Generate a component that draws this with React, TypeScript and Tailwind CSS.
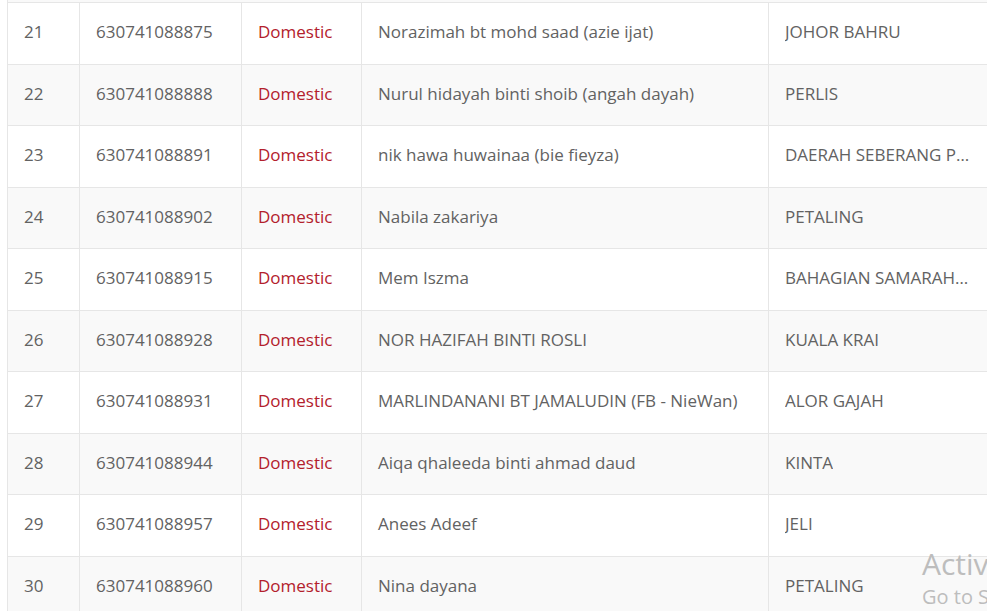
const rows = [
  { no: 21, id: "630741088875", name: "Norazimah bt mohd saad (azie ijat)", city: "JOHOR BAHRU" },
  { no: 22, id: "630741088888", name: "Nurul hidayah binti shoib (angah dayah)", city: "PERLIS" },
  { no: 23, id: "630741088891", name: "nik hawa huwainaa (bie fieyza)", city: "DAERAH SEBERANG PERAI UTARA" },
  { no: 24, id: "630741088902", name: "Nabila zakariya", city: "PETALING" },
  { no: 25, id: "630741088915", name: "Mem Iszma", city: "BAHAGIAN SAMARAHAN" },
  { no: 26, id: "630741088928", name: "NOR HAZIFAH BINTI ROSLI", city: "KUALA KRAI" },
  { no: 27, id: "630741088931", name: "MARLINDANANI BT JAMALUDIN (FB - NieWan)", city: "ALOR GAJAH" },
  { no: 28, id: "630741088944", name: "Aiqa qhaleeda binti ahmad daud", city: "KINTA" },
  { no: 29, id: "630741088957", name: "Anees Adeef", city: "JELI" },
  { no: 30, id: "630741088960", name: "Nina dayana", city: "PETALING" },
];

export default function App() {
  return (
    <div
      className="relative w-[987px] h-[611px] overflow-hidden bg-white text-[17px] text-[#626262]"
      style={{ fontFamily: '"Open Sans", "Noto Sans", sans-serif' }}
    >
      <div className="pl-[7px]">
        <div className="w-[990px] border-l border-[#e6e6e6]">
          <div className="h-[2px] bg-[#f9f9f9]"></div>
          {rows.map((r) => (
            <div
              key={r.no}
              className={`grid grid-cols-[72px_162px_120px_407px_220px] h-[61.5px] border-t border-[#e6e6e6] ${
                r.no % 2 === 0 ? "bg-[#f9f9f9]" : "bg-white"
              }`}
            >
              <div className="flex items-center px-4 pb-[3px] border-r border-[#e6e6e6]">{r.no}</div>
              <div className="flex items-center px-4 pb-[3px] border-r border-[#e6e6e6]">{r.id}</div>
              <div className="flex items-center px-4 pb-[3px] border-r border-[#e6e6e6] text-[#b3202c]">Domestic</div>
              <div className="flex items-center px-4 pb-[3px] border-r border-[#e6e6e6] whitespace-nowrap">{r.name}</div>
              <div className="flex items-center px-4 pb-[3px] min-w-0">
                <span className="truncate">{r.city}</span>
              </div>
            </div>
          ))}
        </div>
      </div>
      <div className="absolute left-[922px] top-[549px] whitespace-nowrap text-[#bdbdbd] leading-none">
        <div className="text-[30px]">Activate Windows</div>
        <div className="text-[20px] mt-[8px]">Go to Settings to activate Windows.</div>
      </div>
    </div>
  );
}
